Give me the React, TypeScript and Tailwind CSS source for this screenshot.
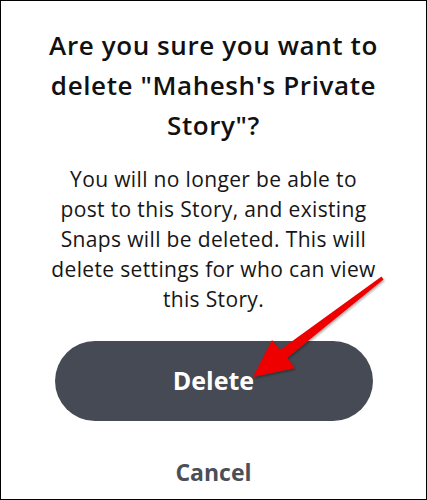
import React from 'react';

function Arrow() {
  return (
    <svg className="pointer-events-none absolute left-0 top-0" width="427" height="500" viewBox="0 0 427 500">
      <defs>
        <filter id="arrowShadow" x="-20%" y="-20%" width="140%" height="140%">
          <feDropShadow dx="1" dy="1.5" stdDeviation="1.2" floodColor="#000" floodOpacity="0.35" />
        </filter>
      </defs>
      <polygon
        points="252,376 271,339 279,349 380.5,275.5 382.5,278.5 286,357 294,367"
        fill="#ee0000"
        filter="url(#arrowShadow)"
      />
    </svg>
  );
}

export default function App() {
  return (
    <div className="relative flex h-[500px] w-[427px] flex-col items-center border border-black bg-white font-['Open_Sans','Liberation_Sans',sans-serif]">
      <h1 className="mt-[24px] whitespace-nowrap text-center text-[26px] font-semibold leading-[40px] tracking-[0.6px] text-[#111111]">
        Are you sure you want to
        <br />
        delete "Mahesh's Private
        <br />
        Story"?
      </h1>
      <p className="mt-[19px] whitespace-nowrap text-center text-[21px] leading-[30px] tracking-[0.35px] text-[#161616]">
        You will no longer be able to
        <br />
        post to this Story, and existing
        <br />
        Snaps will be deleted. This will
        <br />
        delete settings for who can view
        <br />
        this Story.
      </p>
      <button
        type="button"
        className="mt-[27px] flex h-[80px] w-[318px] items-center justify-center rounded-full bg-[#454a54] text-[25px] font-bold text-white"
      >
        Delete
      </button>
      <button type="button" className="mt-[36px] text-[23px] font-bold leading-[30px] text-[#4a4f59]">
        Cancel
      </button>
      <Arrow />
    </div>
  );
}
